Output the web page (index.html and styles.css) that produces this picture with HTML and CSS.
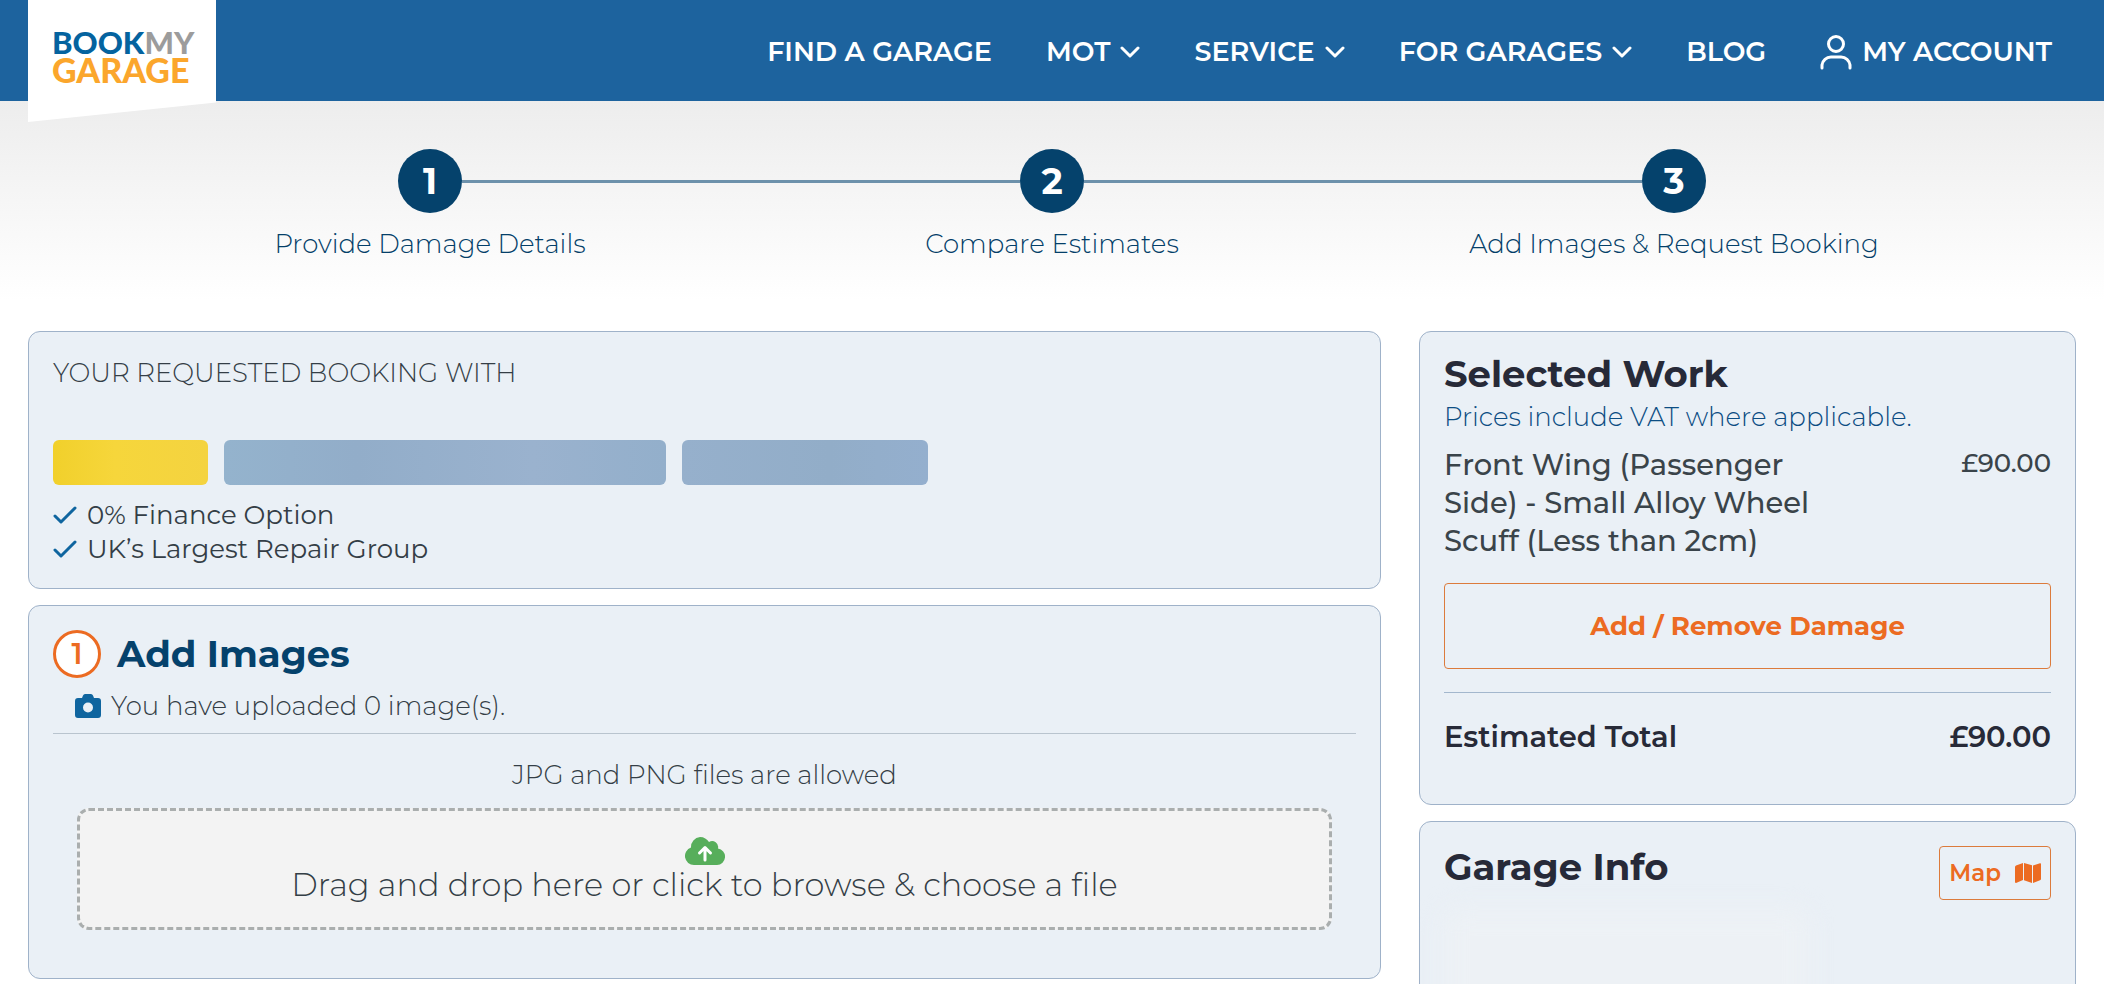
FILE: index.html
```html
<!DOCTYPE html>
<html lang="en">
	<head>
		<meta charset="UTF-8">
		<title>BookMyGarage</title>
		<link rel="stylesheet" href="styles.css">
	</head>
	<body>
		<header class="header">
			<a href="#" class="logo">
				<span class="logo-top">BOOK<span class="logo-my">MY</span></span>
				<span class="logo-bottom">GARAGE</span>
			</a>
			<nav class="nav">
				<a href="#">FIND A GARAGE</a>
				<a href="#">MOT <svg class="chevron" viewBox="0 0 20 12"><path d="M2 2l8 8 8-8"/></svg></a>
				<a href="#">SERVICE <svg class="chevron" viewBox="0 0 20 12"><path d="M2 2l8 8 8-8"/></svg></a>
				<a href="#">FOR GARAGES <svg class="chevron" viewBox="0 0 20 12"><path d="M2 2l8 8 8-8"/></svg></a>
				<a href="#">BLOG</a>
				<a href="#"><svg class="user" viewBox="0 0 32 36"><circle cx="16" cy="10" r="7.5"/><path d="M2 34v-3a9 9 0 0 1 9-8h10a9 9 0 0 1 9 8v3"/></svg> MY ACCOUNT</a>
			</nav>
		</header>

		<main>
			<ol class="steps">
				<li>
					<div class="step-row"><b>1</b></div>
					<p>Provide Damage Details</p>
				</li>
				<li>
					<div class="step-row"><b>2</b></div>
					<p>Compare Estimates</p>
				</li>
				<li>
					<div class="step-row"><b>3</b></div>
					<p>Add Images &amp; Request Booking</p>
				</li>
			</ol>

			<div class="columns">
				<div class="col">
					<section class="card booking">
						<p class="light">YOUR REQUESTED BOOKING WITH</p>
						<div class="bars">
							<span class="bar bar-yellow"></span>
							<span class="bar bar-long"></span>
							<span class="bar bar-short"></span>
						</div>
						<ul class="ticks">
							<li><svg class="tick" viewBox="0 0 24 18"><path d="M2 10l6 6L22 2"/></svg>0% Finance Option</li>
							<li><svg class="tick" viewBox="0 0 24 18"><path d="M2 10l6 6L22 2"/></svg>UK’s Largest Repair Group</li>
						</ul>
					</section>

					<section class="card images">
						<h2><span class="badge">1</span>Add Images</h2>
						<p class="uploaded light">
							<svg class="camera" viewBox="0 0 26 24"><path fill-rule="evenodd" d="M3 4h4l1-2.500Q8.600 0 10 0h6q1.400 0 2 1.500L19 4h4a3 3 0 0 1 3 3v14a3 3 0 0 1-3 3H3a3 3 0 0 1-3-3V7a3 3 0 0 1 3-3zm10 4.500a5 5 0 1 0 0 10 5 5 0 0 0 0-10z"/></svg>
							You have uploaded 0 image(s).
						</p>
						<p class="allowed light" id="allowed">JPG and PNG files are allowed</p>
						<button type="button" class="dropzone light" aria-describedby="allowed">
							<svg class="cloud" viewBox="0 0 40 28"><path class="cloud-shape" d="M9 28a9 9 0 0 1-3-17.500A10 10 0 0 1 15 0c4 0 7 2 9 5a6 6 0 0 1 9 6.500A8.300 8.300 0 0 1 32 28z"/><path class="cloud-arrow" d="M20 23V11M14.500 16l5.500-5.500 5.500 5.500"/></svg>
							Drag and drop here or click to browse &amp; choose a file
						</button>
					</section>
				</div>

				<div class="col">
					<section class="card work">
						<h2>Selected Work</h2>
						<p class="vat light">Prices include VAT where applicable.</p>
						<div class="item">
							<p>Front Wing (Passenger Side) - Small Alloy Wheel Scuff (Less than 2cm)</p>
							<span>£90.00</span>
						</div>
						<button type="button" class="btn">Add / Remove Damage</button>
						<div class="total">
							<span>Estimated Total</span>
							<span>£90.00</span>
						</div>
					</section>

					<section class="card garage">
						<div class="garage-head">
							<h2>Garage Info</h2>
							<button type="button" class="btn btn-map">Map
								<svg class="map" viewBox="0 0 26 20"><path d="M0 4Q0 3 1 2.500L8 0v17L1 20Q0 20 0 19zM9 0l8 2.200V20l-8-2.800zM18 2.500L25 .2Q26 0 26 1v15q0 1-1 1.300L18 20z"/></svg>
							</button>
						</div>
						<div class="smudge"></div>
					</section>
				</div>
			</div>
		</main>
	</body>
</html>
```
FILE: styles.css
```css
*{padding:0;margin:0;box-sizing:border-box;}
body{
	font-family: Montserrat, Inter, sans-serif;
	font-size:26px;
	line-height:34px;
	color:#343e46;
	background:#fff;
}
a{color:inherit;text-decoration:none;}
ul, ol{list-style:none;}
button{font-family:inherit;font-size:inherit;line-height:inherit;color:inherit;cursor:pointer;}
svg{flex:none;}
.light{font-weight:300;}

/* header */
.header{
	display:flex;
	justify-content:space-between;
	align-items:flex-start;
	height:101px;
	padding:0 52px 0 28px;
	background:#1d639e;
}
.logo{
	position:relative;
	z-index:1;
	display:flex;
	flex-direction:column;
	width:188px;
	height:122px;
	padding:28px 24px;
	background:#fff;
	clip-path:polygon(0 0, 100% 0, 100% 84%, 0 100%);
	font-family:Lato, sans-serif;
	font-weight:900;
	font-size:34px;
	line-height:28px;
}
.logo-top{color:#04639f;font-size:31px;white-space:nowrap;}
.logo-my{color:#9c9c9c;}
.logo-bottom{color:#fba62c;}
.nav{
	display:flex;
	align-items:center;
	gap:54px;
	height:103px;
	color:#fff;
	font-size:27px;
	font-weight:600;
	white-space:nowrap;
}
.nav a{display:flex;align-items:center;gap:10px;}
.chevron, .user, .tick{fill:none;stroke:currentColor;stroke-width:3;stroke-linecap:round;stroke-linejoin:round;}
.chevron{width:20px;height:12px;}
.user{width:32px;height:36px;}

/* steps */
main{
	background:linear-gradient(#ededed, #fff 200px);
}
.steps{
	display:flex;
	padding:48px 119px 70px;
	color:#043f69;
	font-weight:300;
	text-align:center;
}
.steps li{flex:1;}
.step-row{display:flex;align-items:center;margin-bottom:14px;}
.step-row:before, .step-row:after{content:"";flex:1;height:3px;background:#6d91ab;}
.steps li:first-child .step-row:before, .steps li:last-child .step-row:after{background:none;}
.step-row b{
	width:64px;
	height:64px;
	border-radius:50%;
	background:#05426c;
	color:#fff;
	font-size:36px;
	font-weight:700;
	line-height:64px;
}

/* cards */
.columns{
	display:grid;
	grid-template-columns:1353fr 657fr;
	gap:38px;
	padding:0 28px;
}
.col{display:flex;flex-direction:column;gap:16px;}
.card{
	padding:24px;
	border:1px solid #9fb2c9;
	border-radius:12px;
	background:#eaf0f6;
}
h2{font-size:37px;font-weight:700;line-height:36px;color:#272a38;}

.bars{display:flex;gap:16px;margin:50px 0 13px;}
.bar{height:45px;border-radius:6px;}
.bar-yellow{width:155px;background:linear-gradient(90deg, #f1d02b, #f6d63b 40%, #f4d340);}
.bar-long{width:442px;background:linear-gradient(90deg, #94b3cd, #92adc9 30%, #9ab2ce 70%, #93afcb);}
.bar-short{width:246px;background:linear-gradient(90deg, #96b0cc, #92adc8 60%, #94afce);}
.booking{padding-bottom:22px;}
.ticks li{display:flex;align-items:center;gap:10px;}
.tick{width:24px;height:18px;color:#0f659f;}

.images{padding-bottom:48px;}
.images h2{display:flex;align-items:center;gap:16px;color:#05426c;}
.badge{
	width:48px;
	height:48px;
	border:3px solid #ec6b22;
	border-radius:50%;
	background:#fff;
	color:#ec6b22;
	font-size:29px;
	font-weight:600;
	line-height:42px;
	text-align:center;
}
.uploaded{
	display:flex;
	align-items:center;
	gap:10px;
	margin-bottom:24px;
	padding:11px 22px 10px;
	border-bottom:1px solid #b9c4ce;
}
.camera{width:26px;height:24px;fill:#0f659f;}
.allowed{margin-bottom:16px;text-align:center;}
.dropzone{
	display:flex;
	flex-direction:column;
	align-items:center;
	width:calc(100% - 48px);
	margin:0 24px;
	padding:26px 20px 22px;
	border:3px dashed #aaaeae;
	border-radius:12px;
	background:#f3f3f3;
	font-size:32px;
	line-height:40px;
}
.cloud{width:40px;height:28px;}
.cloud-shape{fill:#57ae5b;}
.cloud-arrow{fill:none;stroke:#fff;stroke-width:3;stroke-linecap:round;stroke-linejoin:round;}

.vat{margin:8px 0 12px;color:#0c4d83;}
.item{
	display:flex;
	justify-content:space-between;
	align-items:flex-start;
	margin-bottom:23px;
	color:#3a444a;
	font-weight:500;
}
.item p{width:65%;font-size:29px;line-height:38px;}
.btn{
	width:100%;
	padding:25px;
	border:1px solid #dc7b3c;
	border-radius:4px;
	background:none;
	color:#ec6b22;
	font-weight:700;
}
.total{
	display:flex;
	justify-content:space-between;
	margin-top:23px;
	padding:27px 0 26px;
	border-top:1px solid #a3b7cd;
	color:#272a38;
	font-size:29px;
	font-weight:600;
}
.garage{min-height:320px;}
.garage-head{display:flex;justify-content:space-between;align-items:flex-start;}
.garage-head h2{padding-top:3px;}
.btn-map{
	display:flex;
	align-items:center;
	gap:14px;
	width:auto;
	padding:9px;
	font-size:23px;
	font-weight:600;
}
.map{width:26px;height:20px;fill:#ec6b22;}
.smudge{width:60%;height:120px;margin-top:10px;border-radius:12px;background:#edf1f5;filter:blur(12px);}
```
